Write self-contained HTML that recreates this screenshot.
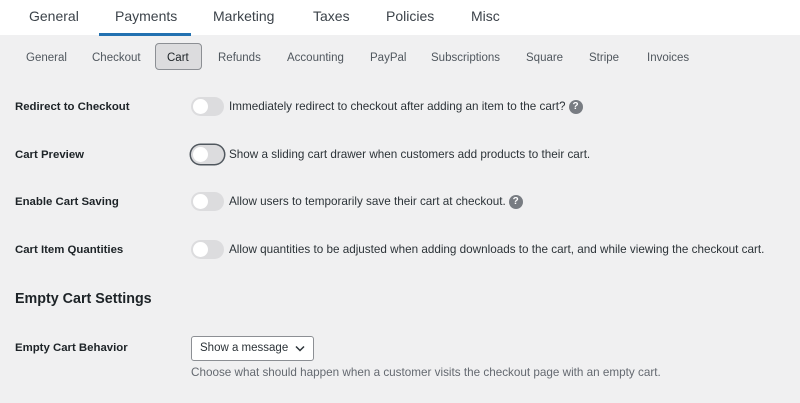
<!DOCTYPE html>
<html><head><meta charset="utf-8"><style>
*{box-sizing:border-box;margin:0;padding:0}
body{width:800px;height:403px;overflow:hidden;background:#f0f0f1;font-family:"Liberation Sans",sans-serif;color:#1d2327;position:relative}
.top{position:absolute;left:0;top:0;width:800px;height:35px;background:#fff}
.top span{position:absolute;top:8px;font-size:14px;color:#3c434a}
.ul{position:absolute;left:99px;top:33px;width:92px;height:3px;background:#2271b1}
.sub span{position:absolute;top:52px;font-size:11.5px;color:#50575e}
.cart{position:absolute;left:155px;top:43px;width:47px;height:27px;border:1px solid #8c8f94;border-radius:4px;background:#dcdcde}
.lbl{position:absolute;left:15px;font-size:11.4px;font-weight:bold;color:#1d2327}
.tg{position:absolute;left:191px;width:33px;height:19px;border-radius:10px;background:#dcdcde}
.tg::after{content:"";position:absolute;left:2px;top:2px;width:15px;height:15px;border-radius:50%;background:#fff}
.tg.f{box-shadow:0 0 0 1.5px #50575e}
.d{position:absolute;left:229px;font-size:11.7px;color:#2c3338;line-height:14px}
.q{display:inline-block;width:14px;height:14px;border-radius:50%;background:#787c82;color:#fff;font-size:10px;font-weight:bold;text-align:center;line-height:14px;vertical-align:top;margin-left:3px}
</style></head><body>
<div class="top">
<span style="left:29px">General</span><span style="left:115px">Payments</span><span style="left:213px">Marketing</span><span style="left:313px">Taxes</span><span style="left:386px">Policies</span><span style="left:471px">Misc</span>
</div>
<div class="ul"></div>
<div class="cart"></div>
<div class="sub">
<span style="left:26px">General</span><span style="left:92px">Checkout</span><span style="left:167px;color:#1d2327">Cart</span><span style="left:218px">Refunds</span><span style="left:287px">Accounting</span><span style="left:370px">PayPal</span><span style="left:431px">Subscriptions</span><span style="left:526px">Square</span><span style="left:589px">Stripe</span><span style="left:647px">Invoices</span>
</div>
<div class="lbl" style="top:101px">Redirect to Checkout</div>
<div class="tg" style="top:97px"></div>
<div class="d" style="top:100px">Immediately redirect to checkout after adding an item to the cart?<span class="q">?</span></div>
<div class="lbl" style="top:149px">Cart Preview</div>
<div class="tg f" style="top:145px"></div>
<div class="d" style="top:148px">Show a sliding cart drawer when customers add products to their cart.</div>
<div class="lbl" style="top:196px">Enable Cart Saving</div>
<div class="tg" style="top:192px"></div>
<div class="d" style="top:195px">Allow users to temporarily save their cart at checkout.<span class="q">?</span></div>
<div class="lbl" style="top:244px">Cart Item Quantities</div>
<div class="tg" style="top:240px"></div>
<div class="d" style="top:243px">Allow quantities to be adjusted when adding downloads to the cart, and while viewing the checkout cart.</div>
<div style="position:absolute;left:15px;top:291px;font-size:14.3px;font-weight:bold">Empty Cart Settings</div>
<div class="lbl" style="top:342px">Empty Cart Behavior</div>
<div style="position:absolute;left:191px;top:336px;width:123px;height:25px;border:1px solid #8c8f94;border-radius:3px;background:#fff;font-size:11.5px;padding:5px 0 0 8px;color:#2c3338">Show a message
<svg style="position:absolute;right:8px;top:8px" width="10" height="7" viewBox="0 0 10 7"><path d="M1 1.5l4 4 4-4" fill="none" stroke="#2c3338" stroke-width="1.5"/></svg></div>
<div style="position:absolute;left:191px;top:366px;font-size:11.7px;color:#646970">Choose what should happen when a customer visits the checkout page with an empty cart.</div>
</body></html>
